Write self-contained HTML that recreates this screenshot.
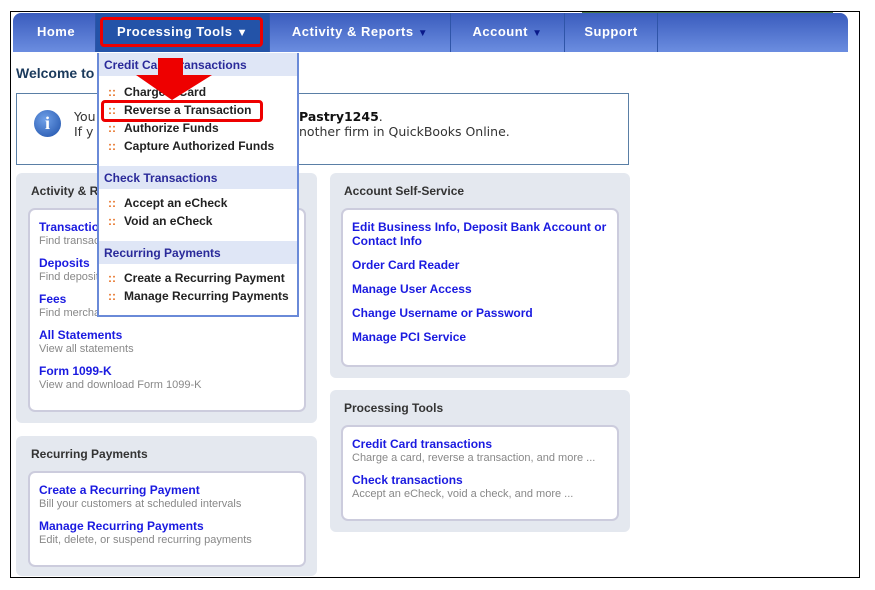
<!DOCTYPE html>
<html><head><style>
*{margin:0;padding:0;box-sizing:border-box}
body{width:875px;height:590px;background:#fff;font-family:"Liberation Sans",Arial,sans-serif;position:relative;overflow:hidden}
.a{position:absolute}
.frame{left:10px;top:11px;width:850px;height:567px;border:1px solid #000}
.nav{left:13px;top:13px;width:835px;height:39px;border-radius:8px 8px 0 0;background:linear-gradient(#3a5cbd,#6b8de0);}
.nav div{position:absolute;top:0;height:39px;line-height:38px;color:#fff;font-weight:bold;font-size:13px;text-align:center;border-right:1px solid #2f55a8;letter-spacing:.5px}
.tri{color:#0a1a8a;font-size:10px}
.panel{background:#e4e8ef;border-radius:6px}
.inner{background:#fff;border:2px solid #ccd;border-radius:7px}
.ph{font-size:12px;font-weight:bold;color:#333}
.lk{font-size:12px;font-weight:bold;color:#1a1ae0;position:absolute;left:9px}
.ds{font-size:11px;color:#888;position:absolute;left:9px}
.dd{left:97px;top:53px;width:202px;height:264px;background:#fff;border:2px solid #6a8ad8;border-top:none}
.dh{position:absolute;left:0;width:198px;height:23px;background:#dfe6f6;color:#2a2a9a;font-weight:bold;font-size:12px;line-height:25px;padding-left:5px}
.di{position:absolute;left:9px;font-size:12px;font-weight:bold;color:#222}
.di b{color:#e8742a;margin-right:8px}
.rb{border:3px solid #e00;border-radius:4px}
.dv{font-family:"DejaVu Sans",Verdana,sans-serif}
</style></head><body>
<div class="a frame"></div>
<div class="a" style="left:582px;top:12px;width:251px;height:2px;background:#4a7a4a"></div>
<div class="a nav">
<div style="left:0;width:83px;padding-left:4px">Home</div>
<div style="left:83px;width:174px;background:#2353a8">Processing Tools <span style="font-size:11px">▼</span></div>
<div style="left:257px;width:181px">Activity &amp; Reports <span class="tri">▼</span></div>
<div style="left:438px;width:114px">Account <span class="tri">▼</span></div>
<div style="left:552px;width:93px">Support</div>
</div>
<div class="a rb" style="left:100px;top:17px;width:163px;height:30px"></div>
<div class="a" style="left:16px;top:65px;font-size:14px;font-weight:bold;color:#1b3a5c">Welcome to</div>
<div class="a" style="left:16px;top:93px;width:613px;height:72px;border:1px solid #5a7fa6"></div>
<div class="a" style="left:34px;top:110px;width:27px;height:27px;border-radius:50%;background:radial-gradient(circle at 40% 35%,#6fa0e8,#1d4fa8);color:#fff;font:bold 18px 'Liberation Serif',serif;text-align:center;line-height:27px">i</div>
<div class="a dv" style="left:74px;top:109px;font-size:12.5px;color:#333;line-height:15px">You<br>If y</div>
<div class="a dv" style="left:299px;top:109px;font-size:12.5px;color:#333;line-height:15px"><b style="color:#111">Pastry1245</b>.<br>nother firm in QuickBooks Online.</div>

<div class="a panel" style="left:16px;top:173px;width:301px;height:250px"><div class="a ph" style="left:15px;top:11px">Activity &amp; R</div></div>
<div class="a inner" style="left:28px;top:208px;width:278px;height:204px">
<div class="lk" style="top:10px">Transactio</div><div class="ds" style="top:25px">Find transac</div>
<div class="lk" style="top:46px">Deposits</div><div class="ds" style="top:61px">Find deposit</div>
<div class="lk" style="top:82px">Fees</div><div class="ds" style="top:97px">Find mercha</div>
<div class="lk" style="top:118px">All Statements</div><div class="ds" style="top:133px">View all statements</div>
<div class="lk" style="top:154px">Form 1099-K</div><div class="ds" style="top:169px">View and download Form 1099-K</div>
</div>
<div class="a panel" style="left:16px;top:436px;width:301px;height:140px"><div class="a ph" style="left:15px;top:11px">Recurring Payments</div></div>
<div class="a inner" style="left:28px;top:471px;width:278px;height:96px">
<div class="lk" style="top:10px">Create a Recurring Payment</div><div class="ds" style="top:25px">Bill your customers at scheduled intervals</div>
<div class="lk" style="top:46px">Manage Recurring Payments</div><div class="ds" style="top:61px">Edit, delete, or suspend recurring payments</div>
</div>
<div class="a panel" style="left:330px;top:173px;width:300px;height:205px"><div class="a ph" style="left:14px;top:11px">Account Self-Service</div></div>
<div class="a inner" style="left:341px;top:208px;width:278px;height:159px">
<div class="lk" style="top:10px;line-height:14px">Edit Business Info, Deposit Bank Account or<br>Contact Info</div>
<div class="lk" style="top:48px">Order Card Reader</div>
<div class="lk" style="top:72px">Manage User Access</div>
<div class="lk" style="top:96px">Change Username or Password</div>
<div class="lk" style="top:120px">Manage PCI Service</div>
</div>
<div class="a panel" style="left:330px;top:390px;width:300px;height:142px"><div class="a ph" style="left:14px;top:11px">Processing Tools</div></div>
<div class="a inner" style="left:341px;top:425px;width:278px;height:96px">
<div class="lk" style="top:10px">Credit Card transactions</div><div class="ds" style="top:25px">Charge a card, reverse a transaction, and more ...</div>
<div class="lk" style="top:46px">Check transactions</div><div class="ds" style="top:61px">Accept an eCheck, void a check, and more ...</div>
</div>

<div class="a dd">
<div class="dh" style="top:0">Credit Card Transactions</div>
<div class="di" style="top:32px"><b>::</b>Charge a Card</div>
<div class="di" style="top:50px"><b>::</b>Reverse a Transaction</div>
<div class="di" style="top:68px"><b>::</b>Authorize Funds</div>
<div class="di" style="top:86px"><b>::</b>Capture Authorized Funds</div>
<div class="dh" style="top:113px">Check Transactions</div>
<div class="di" style="top:143px"><b>::</b>Accept an eCheck</div>
<div class="di" style="top:161px"><b>::</b>Void an eCheck</div>
<div class="dh" style="top:188px">Recurring Payments</div>
<div class="di" style="top:218px"><b>::</b>Create a Recurring Payment</div>
<div class="di" style="top:236px"><b>::</b>Manage Recurring Payments</div>
</div>
<div class="a rb" style="left:101px;top:100px;width:162px;height:22px"></div>
<svg class="a" style="left:130px;top:55px" width="90" height="48"><polygon points="28,3 53,3 53,20 82,20 42,45 6,20 28,20" fill="#e00"/></svg>
</body></html>
